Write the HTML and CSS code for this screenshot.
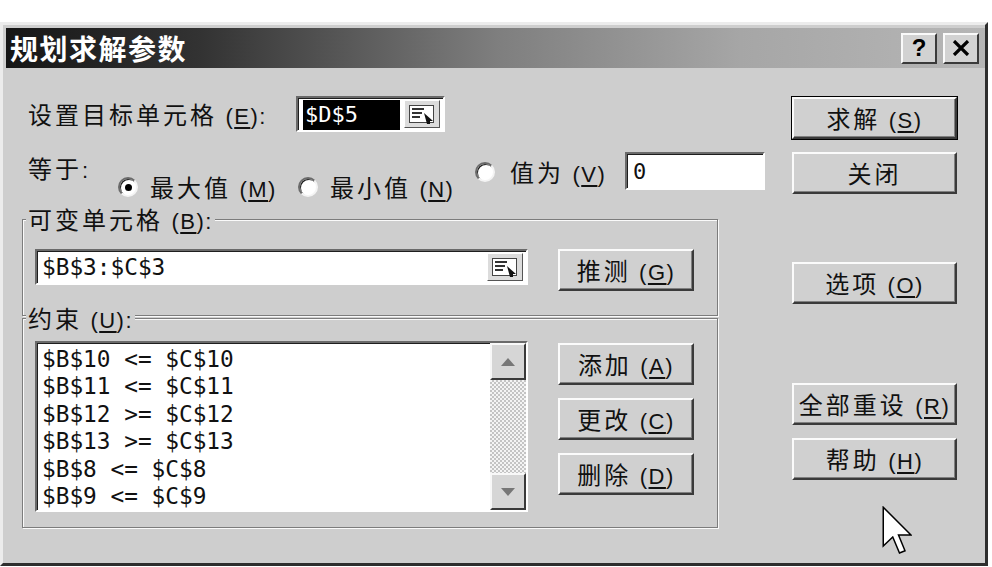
FILE: index.html
```html
<!DOCTYPE html>
<html lang="zh-CN">
<head>
  <meta charset="UTF-8">
  <title>规划求解参数</title>
  <link rel="stylesheet" href="styles.css">
</head>
<body>
  <div class="dialog">
    <div class="titlebar">
      <span class="title">规划求解参数</span>
      <div class="caption-btns">
        <span class="cap-btn">?</span>
        <span class="cap-btn">
          <svg width="18" height="16" viewBox="0 0 18 16"><path d="M2 1 L16 15 M16 1 L2 15" stroke="#000" stroke-width="3.2"/></svg>
        </span>
      </div>
    </div>

    <div class="body">
      <div class="left">
        <div class="row target-row">
          <span class="lbl target-lbl">设置目标单元格 <span class="mn">(<u>E</u>):</span></span>
          <div class="ref-input target-input">
            <span class="sel">$D$5</span>
            <span class="ref-btn">
              <svg width="28" height="22" viewBox="0 0 28 22"><rect x="1.5" y="2.5" width="24" height="17" fill="#fff" stroke="#444"/><path d="M4 6 H16 M4 10 H14 M4 14 H12" stroke="#333" stroke-width="2"/><path d="M16 10 L25 18 L22 18 L22 21 L19 21 Z" fill="#111"/></svg>
            </span>
          </div>
        </div>

        <div class="row equal-row">
          <span class="lbl equal-lbl">等于<span class="mn">:</span></span>
          <label class="radio low r1"><span class="dot on"></span><span>最大值 <span class="mn">(<u>M</u>)</span></span></label>
          <label class="radio low r2"><span class="dot"></span><span>最小值 <span class="mn">(<u>N</u>)</span></span></label>
          <label class="radio r3"><span class="dot"></span><span>值为 <span class="mn">(<u>V</u>)</span></span></label>
          <div class="text-input value-input">0</div>
        </div>

        <fieldset class="group group-vars">
          <legend>可变单元格 <span class="mn">(<u>B</u>):</span></legend>
          <div class="group-row">
            <div class="ref-input vars-input">
              <span class="mono">$B$3:$C$3</span>
              <span class="ref-btn">
                <svg width="28" height="22" viewBox="0 0 28 22"><rect x="1.5" y="2.5" width="24" height="17" fill="#fff" stroke="#444"/><path d="M4 6 H16 M4 10 H14 M4 14 H12" stroke="#333" stroke-width="2"/><path d="M16 10 L25 18 L22 18 L22 21 L19 21 Z" fill="#111"/></svg>
              </span>
            </div>
            <div class="btn small"><span>推测 <span class="mn">(<u>G</u>)</span></span></div>
          </div>
        </fieldset>

        <fieldset class="group group-cons">
          <legend>约束 <span class="mn">(<u>U</u>):</span></legend>
          <div class="group-row">
            <div class="listbox">
              <div class="lines mono">
                <div>$B$10 &lt;= $C$10</div>
                <div>$B$11 &lt;= $C$11</div>
                <div>$B$12 &gt;= $C$12</div>
                <div>$B$13 &gt;= $C$13</div>
                <div>$B$8 &lt;= $C$8</div>
                <div>$B$9 &lt;= $C$9</div>
              </div>
              <div class="scrollbar">
                <span class="sb-btn"><svg width="14" height="8" viewBox="0 0 14 8"><path d="M7 0 L14 8 L0 8 Z" fill="#777"/></svg></span>
                <span class="sb-track"></span>
                <span class="sb-btn"><svg width="14" height="8" viewBox="0 0 14 8"><path d="M0 0 L14 0 L7 8 Z" fill="#777"/></svg></span>
              </div>
            </div>
            <div class="btn-col">
              <div class="btn small"><span>添加 <span class="mn">(<u>A</u>)</span></span></div>
              <div class="btn small"><span>更改 <span class="mn">(<u>C</u>)</span></span></div>
              <div class="btn small"><span>删除 <span class="mn">(<u>D</u>)</span></span></div>
            </div>
          </div>
        </fieldset>
      </div>

      <div class="right">
        <div class="btn big default b-solve"><span>求解 <span class="mn">(<u>S</u>)</span></span></div>
        <div class="btn big b-close"><span>关闭</span></div>
        <div class="btn big b-options"><span>选项 <span class="mn">(<u>O</u>)</span></span></div>
        <div class="btn big b-reset"><span>全部重设 <span class="mn">(<u>R</u>)</span></span></div>
        <div class="btn big b-help"><span>帮助 <span class="mn">(<u>H</u>)</span></span></div>
      </div>

      <svg class="cursor" width="30" height="50" viewBox="0 0 12 20"><path d="M0.5 0.5 L0.5 16 L4.3 12.4 L7 18.8 L9.2 17.9 L6.6 11.6 L11.6 11.6 Z" fill="#fff" stroke="#000" stroke-width="0.6" stroke-linejoin="miter"/></svg>
    </div>
  </div>
</body>
</html>
```

FILE: styles.css
```css
body {
  margin: 0;
  background: #fff;
  font-family: "Noto Sans CJK SC", "Noto Sans", sans-serif;
  color: #111;
}
u {
  text-decoration: underline;
  text-underline-offset: 3px;
}
.mn {
  font-family: "Liberation Sans", sans-serif;
  font-size: 22px;
  letter-spacing: 1.5px;
  line-height: 1;
}
.dialog {
  margin-top: 22px;
  width: 988px;
  height: 544px;
  box-sizing: border-box;
  padding: 3px 0 0 3px;
  border: 3px solid;
  border-color: #ececec #2e2e2e #2e2e2e #ececec;
  background: #cecece;
}
.titlebar {
  height: 40px;
  display: flex;
  align-items: center;
  justify-content: space-between;
  padding: 0 6px 0 4px;
  background: linear-gradient(90deg, #161616 0%, #333 20%, #7e7e7e 50%, #a6a6a6 75%, #b6b6b6 100%);
}
.title {
  color: #fff;
  font-weight: bold;
  font-size: 28px;
  letter-spacing: 1.5px;
  line-height: 40px;
}
.caption-btns {
  display: flex;
  gap: 6px;
}
.cap-btn {
  width: 36px;
  height: 31px;
  box-sizing: border-box;
  display: flex;
  align-items: center;
  justify-content: center;
  background: #d2d2d2;
  border: 2px solid;
  border-color: #fafafa #3a3a3a #3a3a3a #fafafa;
  font-family: "Liberation Sans", sans-serif;
  font-weight: bold;
  font-size: 24px;
  color: #000;
}
.body {
  position: relative;
  display: flex;
  padding: 28px 0 0 16px;
}
.left {
  width: 696px;
}
.row {
  display: flex;
  padding-left: 6px;
}
.lbl, .radio, legend, .btn {
  font-size: 24px;
  letter-spacing: 3px;
  line-height: 26px;
  white-space: nowrap;
}
.target-row {
  align-items: center;
  height: 36px;
}
.target-lbl {
  width: 268px;
  height: 26px;
  flex-shrink: 0;
}
.ref-input {
  display: flex;
  align-items: center;
  box-sizing: border-box;
  background: #fff;
  border: 2px solid;
  border-color: #6a6a6a #fff #fff #6a6a6a;
  box-shadow: inset 1px 1px 0 #1e1e1e;
}
.target-input {
  width: 149px;
  height: 36px;
  padding: 0 3px 0 5px;
}
.sel {
  background: #000;
  color: #fff;
  width: 97px;
  height: 30px;
  line-height: 30px;
  margin-top: 2px;
  font-family: "DejaVu Sans Mono", monospace;
  font-size: 22px;
  padding-left: 2px;
  box-sizing: border-box;
}
.ref-btn {
  margin-left: auto;
  width: 36px;
  height: 28px;
  box-sizing: border-box;
  display: flex;
  align-items: center;
  justify-content: center;
  background: #dcdcdc;
  border: 1px solid;
  border-color: #fff #555 #555 #fff;
}
.equal-row {
  margin-top: 20px;
  height: 46px;
  align-items: flex-start;
}
.equal-lbl {
  width: 90px;
  height: 26px;
  flex-shrink: 0;
  margin-top: 3px;
}
.radio {
  display: flex;
  align-items: center;
  gap: 12px;
  height: 26px;
  flex-shrink: 0;
}
.radio.low {
  margin-top: 22px;
}
.r1 { width: 180px; }
.r2 { width: 177px; }
.r3 { width: 150px; margin-top: 7px; gap: 15px; }
.dot {
  width: 20px;
  height: 20px;
  flex-shrink: 0;
  box-sizing: border-box;
  border-radius: 50%;
  background: #fff;
  border: 2px solid;
  border-color: #6a6a6a #f4f4f4 #f4f4f4 #6a6a6a;
  box-shadow: inset 1px 1px 0 #222;
  display: flex;
  align-items: center;
  justify-content: center;
}
.dot.on::after {
  content: "";
  width: 7px;
  height: 7px;
  border-radius: 50%;
  background: #000;
}
.text-input {
  box-sizing: border-box;
  background: #fff;
  border: 2px solid;
  border-color: #6a6a6a #fff #fff #6a6a6a;
  box-shadow: inset 1px 1px 0 #1e1e1e;
}
.value-input {
  width: 140px;
  height: 38px;
  flex-shrink: 0;
  padding: 3px 0 0 6px;
  font-family: "DejaVu Sans Mono", monospace;
  font-size: 22px;
  line-height: 30px;
}
.mono {
  font-family: "DejaVu Sans Mono", monospace;
  font-size: 22.75px;
}
.group {
  margin: 0;
  width: 696px;
  box-sizing: border-box;
  border: 1px solid #7c7c7c;
  box-shadow: inset 1px 1px 0 #fafafa, 1px 1px 0 #fafafa;
  padding: 17px 22px 24px 12px;
}
.group legend {
  height: 26px;
  padding: 0 2px;
  margin-left: -9px;
  background: #cecece;
}
.group-vars {
  margin-top: 8px;
}
.group-cons {
  margin-top: -11px;
  padding-top: 10px;
  padding-bottom: 15px;
}
.group-row {
  display: flex;
  gap: 30px;
}
.vars-input {
  width: 493px;
  height: 36px;
  padding: 0 3px 0 5px;
}
.btn {
  display: flex;
  align-items: center;
  justify-content: center;
  box-sizing: border-box;
  background: #d0d0d0;
  border: 2px solid;
  border-color: #fbfbfb #3a3a3a #3a3a3a #fbfbfb;
  box-shadow: inset -1px -1px 0 #808080;
}
.btn.small {
  width: 136px;
  height: 42px;
}
.btn.big {
  width: 165px;
  height: 42px;
}
.btn.default {
  outline: 1px solid #000;
}
.listbox {
  width: 493px;
  height: 171px;
  box-sizing: border-box;
  display: flex;
  background: #fff;
  border: 2px solid;
  border-color: #6a6a6a #fff #fff #6a6a6a;
  box-shadow: inset 1px 1px 0 #1e1e1e;
}
.lines {
  flex: 1;
  padding: 3px 0 0 5px;
  line-height: 27.4px;
}
.scrollbar {
  width: 36px;
  display: flex;
  flex-direction: column;
}
.sb-btn {
  height: 37px;
  box-sizing: border-box;
  display: flex;
  align-items: center;
  justify-content: center;
  background: #d6d6d6;
  border: 2px solid;
  border-color: #f8f8f8 #3a3a3a #3a3a3a #f8f8f8;
}
.sb-track {
  flex: 1;
  background-color: #fff;
  background-image: repeating-conic-gradient(#c4c4c4 0 25%, #f4f4f4 0 50%);
  background-size: 4px 4px;
}
.btn-col {
  display: flex;
  flex-direction: column;
  gap: 13px;
  margin-top: 2px;
}
.right {
  margin-left: 74px;
  display: flex;
  flex-direction: column;
}
.b-solve { margin-top: 1px; }
.b-close { margin-top: 13px; }
.b-options { margin-top: 68px; }
.b-reset { margin-top: 79px; }
.b-help { margin-top: 13px; }
.cursor {
  position: absolute;
  left: 876px;
  top: 438px;
}
```
